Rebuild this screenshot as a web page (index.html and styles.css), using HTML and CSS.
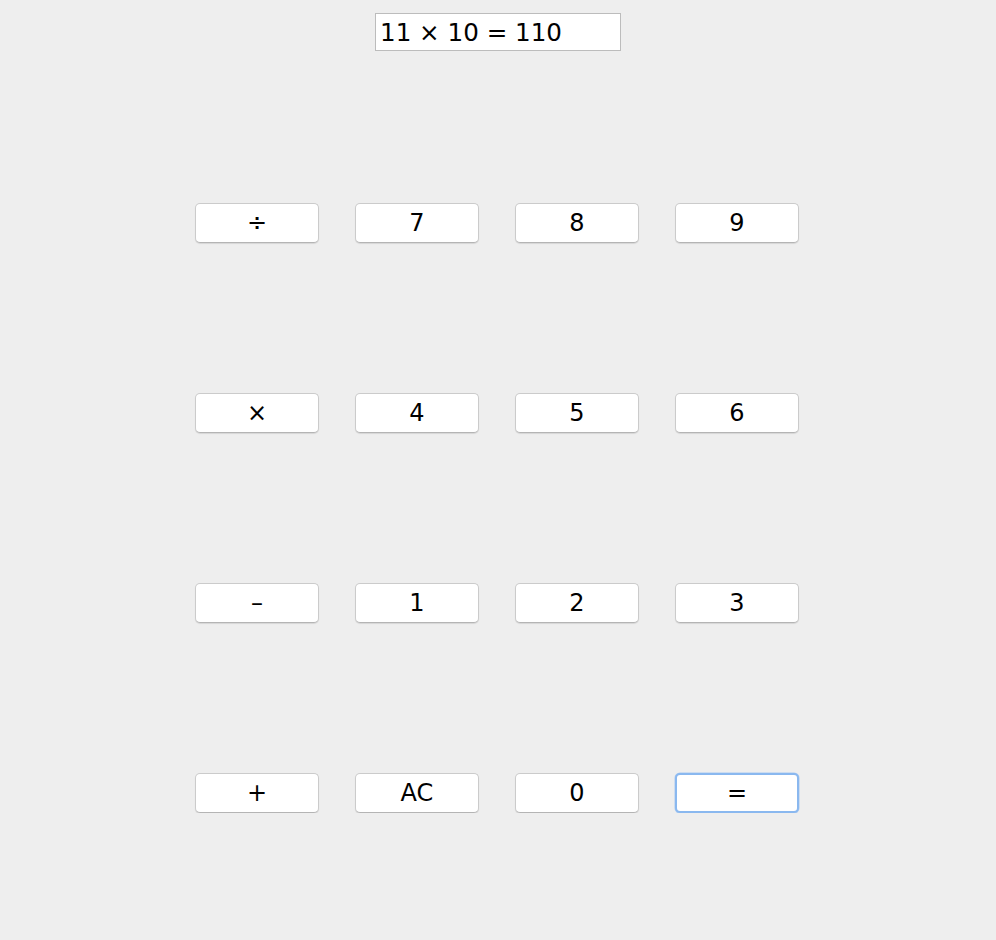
FILE: index.html
```html
<!DOCTYPE html>
<html>
<head>
<meta charset="utf-8">
<link rel="stylesheet" href="styles.css">
</head>
<body>
<div class="calc">
  <div class="display">11 × 10 = 110</div>
  <div class="keys">
    <button class="key">÷</button>
    <button class="key">7</button>
    <button class="key">8</button>
    <button class="key">9</button>
    <button class="key">×</button>
    <button class="key">4</button>
    <button class="key">5</button>
    <button class="key">6</button>
    <button class="key">–</button>
    <button class="key">1</button>
    <button class="key">2</button>
    <button class="key">3</button>
    <button class="key">+</button>
    <button class="key">AC</button>
    <button class="key">0</button>
    <button class="key focus">=</button>
  </div>
</div>
</body>
</html>
```
FILE: styles.css
```css
html, body {
  background: #eeeeee;
}
body {
  margin: 8px;
  font-family: "DejaVu Sans", sans-serif;
}
.calc {
  display: flex;
  flex-direction: column;
  align-items: center;
  padding-top: 5px;
}
.display {
  box-sizing: border-box;
  width: 246px;
  height: 38px;
  background: #fff;
  border: 1px solid #bcbcbc;
  font-size: 24.6px;
  line-height: 38px;
  padding-left: 4px;
  color: #000;
}
.keys {
  margin-top: 152px;
  margin-right: 2px;
  display: grid;
  grid-template-columns: repeat(4, 124px);
  grid-auto-rows: 40px;
  column-gap: 36px;
  row-gap: 150px;
}
.key {
  box-sizing: border-box;
  margin: 0;
  padding: 0;
  background: #fff;
  border: 1px solid #cbcbcb;
  border-bottom-color: #b4b4b4;
  border-radius: 5px;
  box-shadow: 0 1px 1px rgba(0,0,0,0.1);
  font-family: "DejaVu Sans", sans-serif;
  font-size: 24px;
  color: #000;
  line-height: 38px;
}
.key.focus {
  border: 2px solid #8ab8ef;
  box-shadow: 0 0 0 0.5px #a9c9f2;
  line-height: 36px;
}
```
